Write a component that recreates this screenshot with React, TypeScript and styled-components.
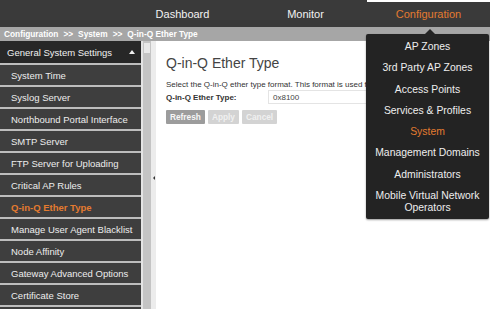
import React from 'react';
import styled, { createGlobalStyle } from 'styled-components';

const GlobalStyle = createGlobalStyle`
  html, body {
    margin: 0;
    padding: 0;
    width: 490px;
    height: 309px;
    overflow: hidden;
    background: #ffffff;
    font-family: 'Liberation Sans', Arial, sans-serif;
  }
`;

const Page = styled.div`
  position: relative;
  width: 490px;
  height: 309px;
  display: flex;
  flex-direction: column;
  overflow: hidden;
`;

const TopBar = styled.div`
  height: 27px;
  flex-shrink: 0;
  background: #3a3a3a;
  display: flex;
  justify-content: flex-end;
`;

const Tab = styled.div<{ $active?: boolean }>`
  width: 123px;
  display: flex;
  align-items: center;
  justify-content: center;
  font-size: 11px;
  color: ${(p) => (p.$active ? '#e47b30' : '#f2f2f2')};
  border-top: 2px solid ${(p) => (p.$active ? '#ffffff' : 'transparent')};
  box-sizing: border-box;
  padding-bottom: 1px;
`;

const Crumbs = styled.div`
  height: 14px;
  flex-shrink: 0;
  background: #a6a6a6;
  display: flex;
  align-items: center;
  gap: 5px;
  padding-left: 4px;
  font-size: 8.3px;
  font-weight: bold;
  color: #ffffff;
`;

const Body = styled.div`
  flex: 1;
  display: flex;
  min-height: 0;
`;

const Sidebar = styled.div`
  width: 141px;
  background: #bdbdbd;
  display: flex;
  flex-direction: column;
  overflow: hidden;
`;

const SideHeader = styled.div`
  height: 22px;
  flex-shrink: 0;
  background: #272727;
  display: flex;
  align-items: center;
  justify-content: space-between;
  padding: 0 6px 0 7px;
  font-size: 9.5px;
  color: #f0f0f0;
  box-sizing: border-box;
`;

const Caret = styled.span`
  width: 0;
  height: 0;
  border-left: 3px solid transparent;
  border-right: 3px solid transparent;
  border-bottom: 4px solid #f0f0f0;
`;

const SideItem = styled.div<{ $active?: boolean }>`
  height: 20px;
  flex-shrink: 0;
  margin-top: 2px;
  background: #3e3e3e;
  display: flex;
  align-items: center;
  padding-left: 11px;
  font-size: 9.5px;
  white-space: nowrap;
  color: ${(p) => (p.$active ? '#e47b30' : '#ededed')};
  font-weight: ${(p) => (p.$active ? 'bold' : 'normal')};
`;

const Scrollbar = styled.div`
  width: 10px;
  background: linear-gradient(90deg, #e4e4e4 0, #e4e4e4 2px, #c4c4c4 2px, #c4c4c4 100%);
  display: flex;
  flex-direction: column;
`;

const Thumb = styled.div`
  height: 10px;
  margin: 2px 1px 0 3px;
  background: #e8e8e8;
`;

const Splitter = styled.div`
  width: 5px;
  background: #ececec;
  display: flex;
  align-items: center;
  justify-content: center;
`;

const SplitArrow = styled.span`
  width: 0;
  height: 0;
  margin-top: 6px;
  border-top: 2px solid transparent;
  border-bottom: 2px solid transparent;
  border-right: 2px solid #333;
`;

const Content = styled.div`
  flex: 1;
  padding: 14px 0 0 10px;
  display: flex;
  flex-direction: column;
  min-width: 0;
  color: #333;
`;

const Title = styled.div`
  font-size: 14px;
  color: #444;
  margin-bottom: 9px;
`;

const Desc = styled.div`
  font-size: 8px;
  color: #333;
  white-space: nowrap;
`;

const FieldRow = styled.div`
  display: flex;
  align-items: center;
  margin-top: 1px;
`;

const Label = styled.div`
  width: 102px;
  font-size: 8px;
  font-weight: bold;
  color: #333;
`;

const Input = styled.div`
  width: 120px;
  height: 12px;
  padding-left: 4px;
  display: flex;
  align-items: center;
  font-size: 8px;
  color: #444;
  border: 1px solid #e4e4e4;
`;

const Buttons = styled.div`
  display: flex;
  gap: 3px;
  margin-top: 6px;
`;

const Button = styled.div<{ $enabled?: boolean }>`
  height: 14px;
  padding: 0 4px;
  display: flex;
  align-items: center;
  font-size: 8.3px;
  font-weight: bold;
  color: ${(p) => (p.$enabled ? '#f6f6f6' : '#f0f0f0')};
  background: ${(p) => (p.$enabled ? '#9c9c9c' : '#d3d3d3')};
  border-radius: 1px;
`;

const Menu = styled.div`
  position: absolute;
  left: 366px;
  top: 34px;
  width: 123px;
  padding: 3px 0 1px;
  background: #232323;
  border-radius: 2px;
  box-shadow: 0 1px 2px rgba(0, 0, 0, 0.4);
  display: flex;
  flex-direction: column;

  &::before {
    content: '';
    position: absolute;
    top: -5px;
    left: 59px;
    border-left: 5px solid transparent;
    border-right: 5px solid transparent;
    border-bottom: 5px solid #232323;
  }
`;

const MenuItem = styled.div<{ $active?: boolean }>`
  padding: 4px;
  min-height: 13.3px;
  text-align: center;
  font-size: 10.4px;
  line-height: 12px;
  color: ${(p) => (p.$active ? '#e47b30' : '#eeeeee')};
`;

const sideItems = [
  'System Time',
  'Syslog Server',
  'Northbound Portal Interface',
  'SMTP Server',
  'FTP Server for Uploading',
  'Critical AP Rules',
  'Q-in-Q Ether Type',
  'Manage User Agent Blacklist',
  'Node Affinity',
  'Gateway Advanced Options',
  'Certificate Store',
  '',
];

const menuItems = [
  'AP Zones',
  '3rd Party AP Zones',
  'Access Points',
  'Services & Profiles',
  'System',
  'Management Domains',
  'Administrators',
  'Mobile Virtual Network Operators',
];

export default function App() {
  return (
    <Page>
      <GlobalStyle />
      <TopBar>
        <Tab>Dashboard</Tab>
        <Tab>Monitor</Tab>
        <Tab $active>Configuration</Tab>
      </TopBar>
      <Crumbs>
        <span>Configuration</span>
        <span>&gt;&gt;</span>
        <span>System</span>
        <span>&gt;&gt;</span>
        <span>Q-in-Q Ether Type</span>
      </Crumbs>
      <Body>
        <Sidebar>
          <SideHeader>
            <span>General System Settings</span>
            <Caret />
          </SideHeader>
          {sideItems.map((item, i) => (
            <SideItem key={i} $active={item === 'Q-in-Q Ether Type'}>
              {item}
            </SideItem>
          ))}
        </Sidebar>
        <Scrollbar>
          <Thumb />
        </Scrollbar>
        <Splitter>
          <SplitArrow />
        </Splitter>
        <Content>
          <Title>Q-in-Q Ether Type</Title>
          <Desc>Select the Q-in-Q ether type format. This format is used for tunneling.</Desc>
          <FieldRow>
            <Label>Q-in-Q Ether Type:</Label>
            <Input>0x8100</Input>
          </FieldRow>
          <Buttons>
            <Button $enabled>Refresh</Button>
            <Button>Apply</Button>
            <Button>Cancel</Button>
          </Buttons>
        </Content>
      </Body>
      <Menu>
        {menuItems.map((item) => (
          <MenuItem key={item} $active={item === 'System'}>
            {item === 'Mobile Virtual Network Operators' ? (
              <>
                Mobile Virtual Network
                <br />
                Operators
              </>
            ) : (
              item
            )}
          </MenuItem>
        ))}
      </Menu>
    </Page>
  );
}
